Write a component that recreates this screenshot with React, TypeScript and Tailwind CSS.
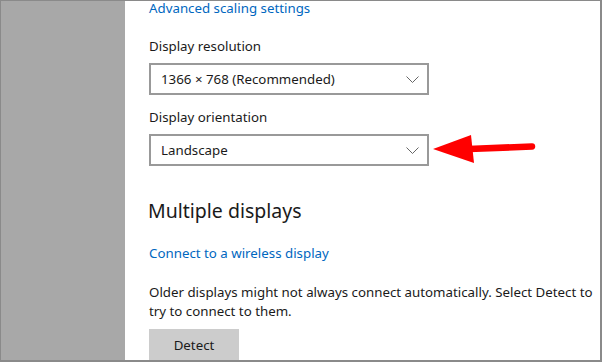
const font = { fontFamily: '"Noto Sans", "Open Sans", sans-serif' }

function Chevron() {
  return (
    <svg width="13" height="7" viewBox="0 0 13 7" className="text-[#666666]">
      <polyline points="0.5,0.5 6.5,6.5 12.5,0.5" fill="none" stroke="currentColor" strokeWidth="1" />
    </svg>
  )
}

function Dropdown({ value }: { value: string }) {
  return (
    <div className="w-[280px] h-[32px] border-2 border-[#999999] flex items-center justify-between pl-[10px] pr-[8px] bg-white">
      <span className="text-[13.3px] text-[#1a1a1a]">{value}</span>
      <Chevron />
    </div>
  )
}

export default function App() {
  return (
    <div
      className="w-[602px] h-[362px] overflow-hidden flex border-t border-l border-r-2 border-b-2 border-[#8a8a8a] bg-white"
      style={font}
    >
      <div className="w-[124px] shrink-0 bg-[#a8a8a8]" />
      <div className="relative flex-1 pl-[24px] leading-[20px] text-[13.3px] text-[#1a1a1a]">
        <div className="-mt-[3px] text-[#0067c0]">Advanced scaling settings</div>

        <div className="mt-[18px]">Display resolution</div>
        <div className="mt-[7px]">
          <Dropdown value="1366 × 768 (Recommended)" />
        </div>

        <div className="mt-[12px]">Display orientation</div>
        <div className="mt-[7px]">
          <Dropdown value="Landscape" />
        </div>

        <div className="mt-[31px] text-[19.5px] leading-[28px] -ml-[1px]">Multiple displays</div>

        <div className="mt-[18px] text-[#0067c0]">Connect to a wireless display</div>

        <div className="mt-[20px] w-[444px] leading-[19px]">
          Older displays might not always connect automatically. Select Detect to try to connect to them.
        </div>

        <button className="mt-[8px] w-[90px] h-[32px] bg-[#cccccc] text-[13.3px] text-[#1a1a1a]">
          Detect
        </button>

        {/* red annotation arrow */}
        <svg
          className="absolute left-[306px] top-[131px]"
          width="106"
          height="34"
          viewBox="0 0 106 34"
        >
          <line x1="38" y1="17" x2="101" y2="14.5" stroke="#ff0000" strokeWidth="6.5" strokeLinecap="round" />
          <polygon points="2,17 40,3 43,31" fill="#ff0000" />
        </svg>
      </div>
    </div>
  )
}
